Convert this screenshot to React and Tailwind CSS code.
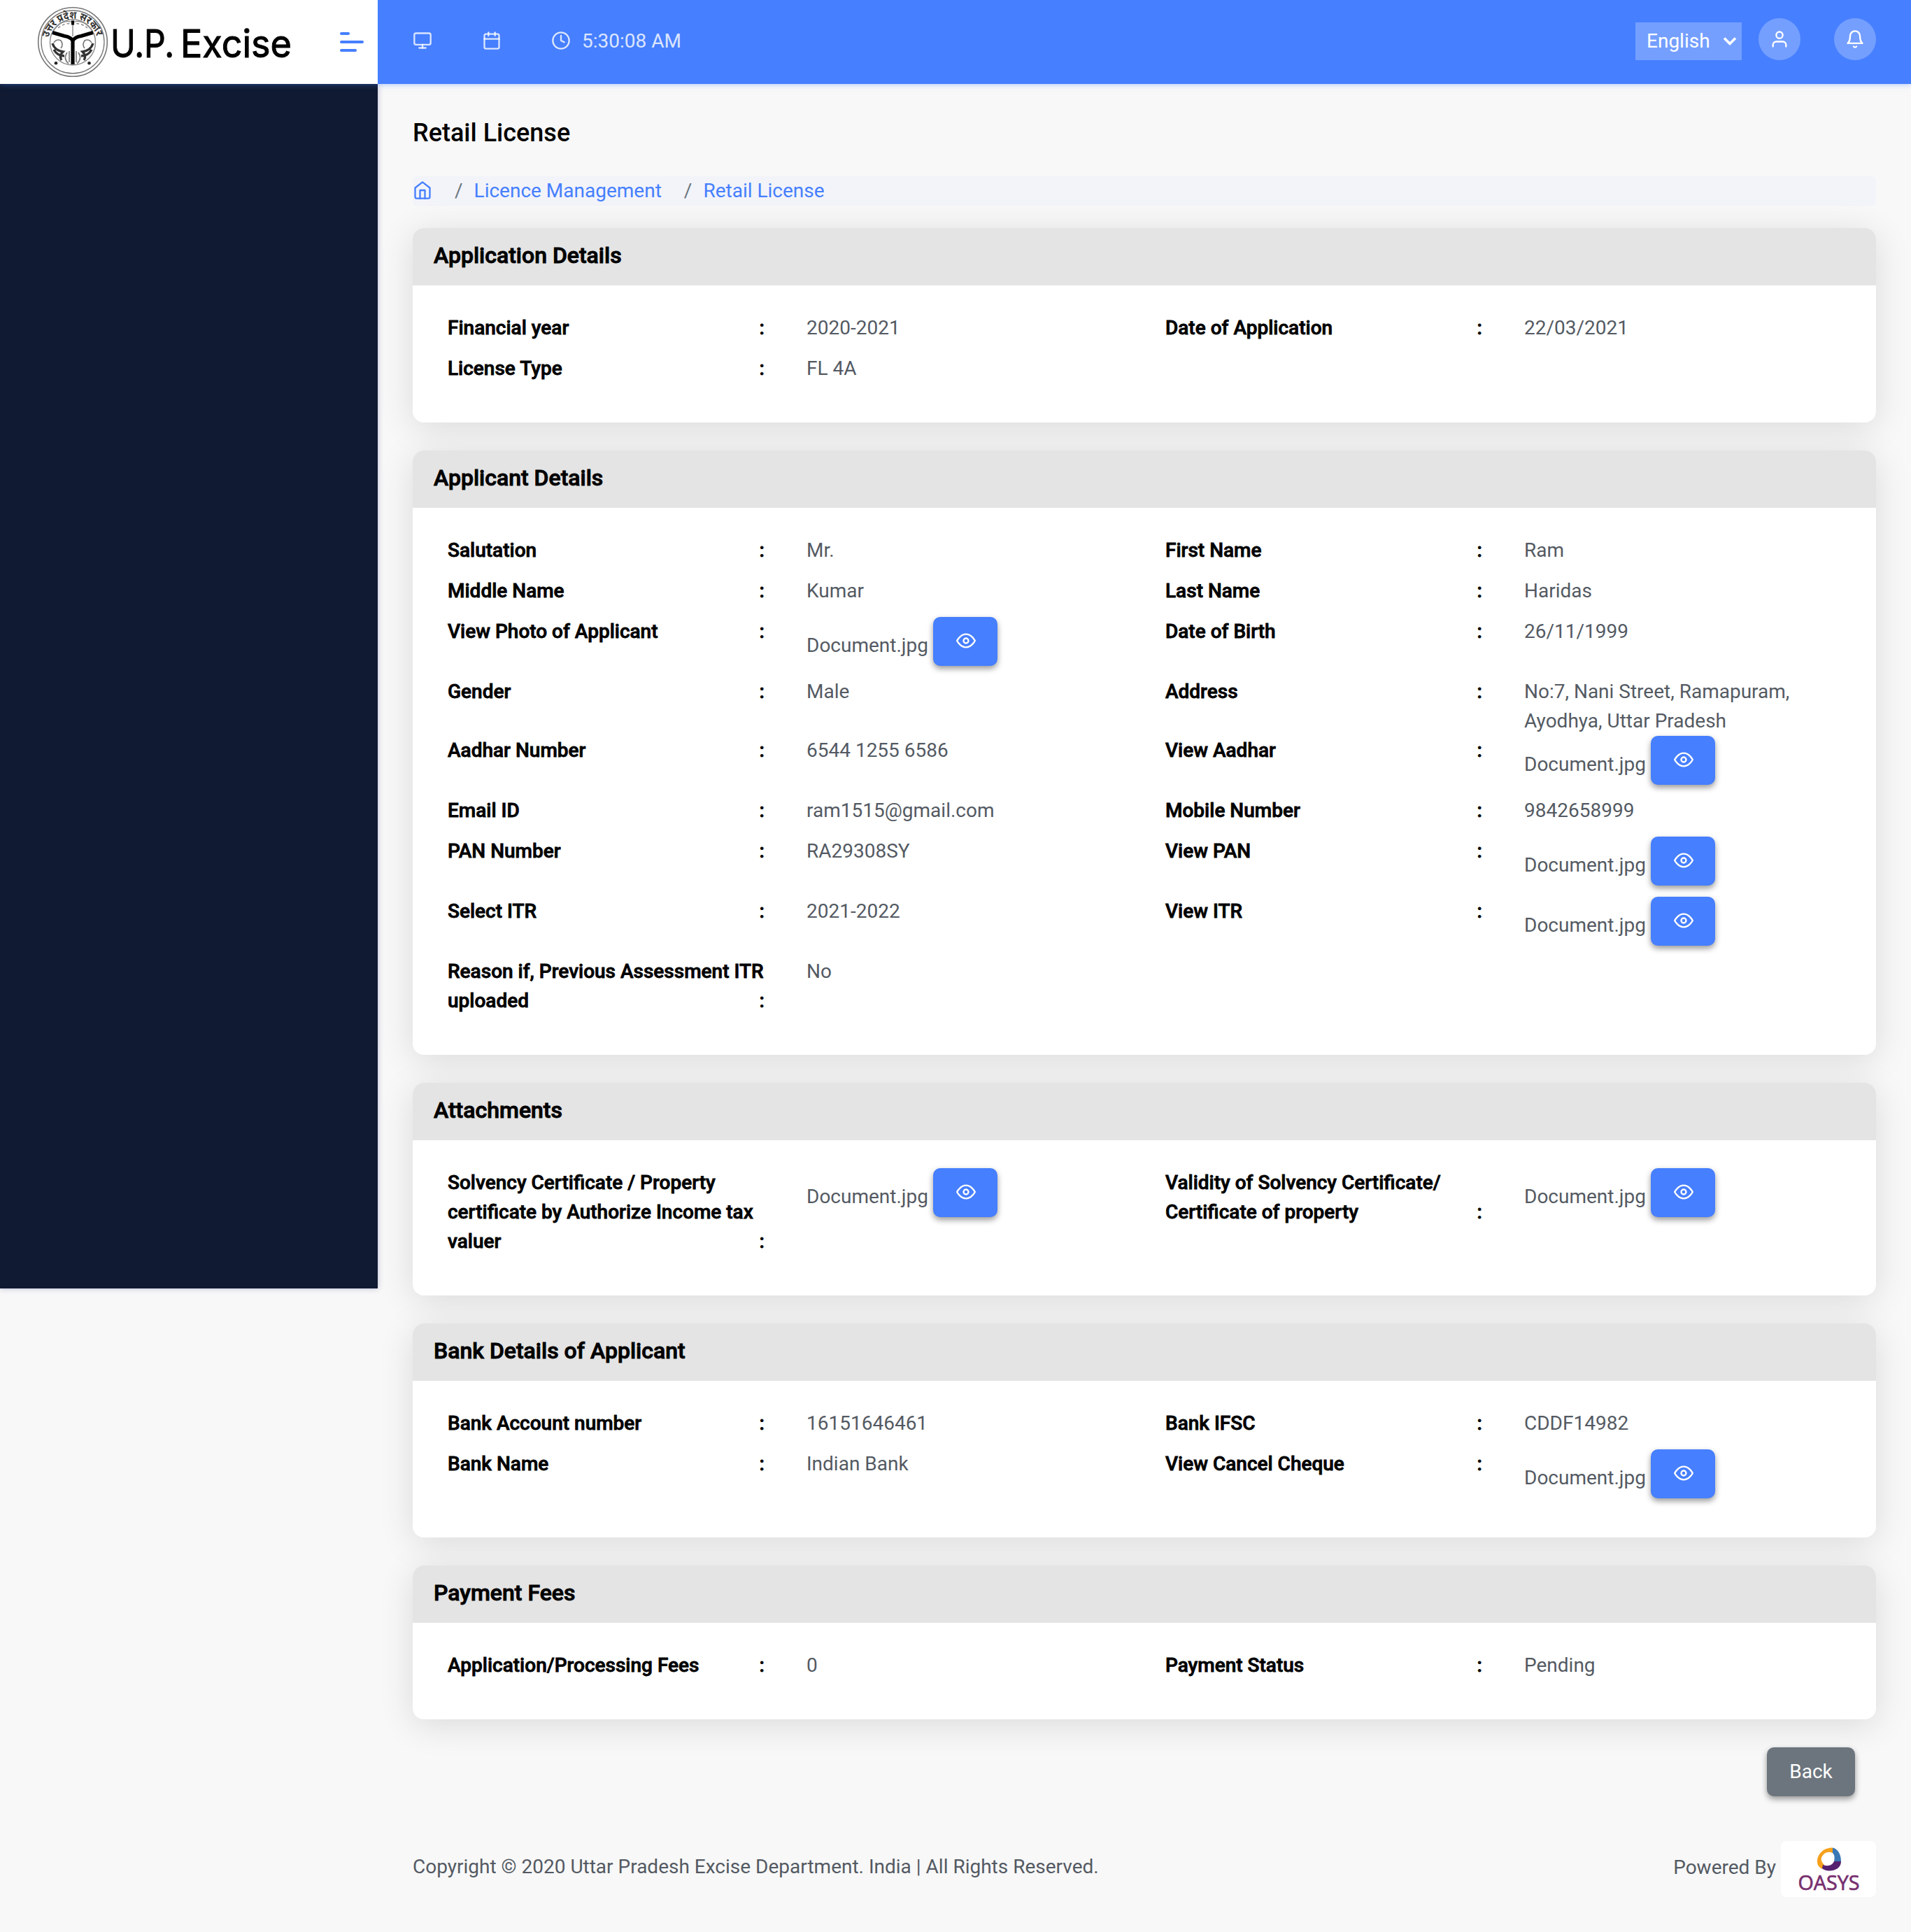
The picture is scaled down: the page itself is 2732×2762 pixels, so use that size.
import { FiMonitor, FiCalendar, FiClock, FiUser, FiBell, FiHome, FiEye } from "react-icons/fi";

const sections = [
  {
    title: "Application Details",
    rows: [
      [["Financial year"], "2020-2021", ["Date of Application"], "22/03/2021"],
      [["License Type"], "FL 4A"],
    ],
  },
  {
    title: "Applicant Details",
    rows: [
      [["Salutation"], "Mr.", ["First Name"], "Ram"],
      [["Middle Name"], "Kumar", ["Last Name"], "Haridas"],
      [["View Photo of Applicant"], { doc: "Document.jpg" }, ["Date of Birth"], "26/11/1999"],
      [["Gender"], "Male", ["Address"], "No:7, Nani Street, Ramapuram, Ayodhya, Uttar Pradesh"],
      [["Aadhar Number"], "6544 1255 6586", ["View Aadhar"], { doc: "Document.jpg" }],
      [["Email ID"], "ram1515@gmail.com", ["Mobile Number"], "9842658999"],
      [["PAN Number"], "RA29308SY", ["View PAN"], { doc: "Document.jpg" }],
      [["Select ITR"], "2021-2022", ["View ITR"], { doc: "Document.jpg" }],
      [["Reason if, Previous Assessment ITR", "uploaded"], "No"],
    ],
  },
  {
    title: "Attachments",
    rows: [
      [
        ["Solvency Certificate / Property", "certificate by Authorize Income tax", "valuer"],
        { doc: "Document.jpg" },
        ["Validity of Solvency Certificate/", "Certificate of property"],
        { doc: "Document.jpg" },
      ],
    ],
  },
  {
    title: "Bank Details of Applicant",
    rows: [
      [["Bank Account number"], "16151646461", ["Bank IFSC"], "CDDF14982"],
      [["Bank Name"], "Indian Bank", ["View Cancel Cheque"], { doc: "Document.jpg" }],
    ],
  },
  {
    title: "Payment Fees",
    rows: [[["Application/Processing Fees"], "0", ["Payment Status"], "Pending"]],
  },
];

function Label({ lines }) {
  return (
    <div className="mb-4 px-[30px] font-medium text-black [-webkit-text-stroke:0.8px_#000]">
      {lines.map((line, i) => (
        <div key={line} className="flex justify-between whitespace-nowrap">
          <span>{line}</span>
          {i === lines.length - 1 && <span>:</span>}
        </div>
      ))}
    </div>
  );
}

function Value({ value }) {
  if (value.doc) {
    return (
      <div className="mb-4 flex px-[30px]">
        <span className="pt-5">{value.doc}</span>
        <button className="ml-[7px] flex h-[70px] w-[92px] justify-center rounded-[10px] bg-[#467fff] pt-[19.5px] pl-px text-white shadow-[0_4px_8px_rgba(0,0,0,0.4)]">
          <FiEye className="size-[28px]" />
        </button>
      </div>
    );
  }
  return <div className="px-[30px]">{value}</div>;
}

function Card({ title, rows }) {
  return (
    <section className="mb-10 rounded-2xl bg-white shadow-[0_8px_50px_rgba(0,0,0,0.12)]">
      <h2 className="h-[82px] rounded-t-2xl bg-[#e4e4e4] pl-[30px] text-[32px] leading-[78px] font-medium text-black [-webkit-text-stroke:0.9px_#000]">{title}</h2>
      <div className="px-5 py-10">
        {rows.map((r) => (
          <div key={r[0][0]} className="grid grid-cols-4">
            <Label lines={r[0]} />
            <Value value={r[1]} />
            {r[2] && <Label lines={r[2]} />}
            {r[3] && <Value value={r[3]} />}
          </div>
        ))}
      </div>
    </section>
  );
}

function BrandLogo() {
  return (
    <svg className="ml-[50px] h-[120px] w-[380px]" viewBox="50 0 380 120">
      <defs>
        <path id="arc" d="M69.500 54 A35.500 35.500 0 0 1 138.500 54" />
      </defs>
      <g fill="none" stroke="#777">
        <circle cx="104" cy="60" r="49.300" strokeWidth="1.600" />
        <circle cx="104" cy="60" r="45" strokeWidth="1.300" />
      </g>
      <text fontFamily="Noto Sans, sans-serif" fontSize="15" fontWeight="700" fill="#333">
        <textPath href="#arc" textLength="92" lengthAdjust="spacingAndGlyphs">उत्तर प्रदेश सरकार</textPath>
      </text>
      <g fill="none" stroke="#888" strokeWidth="1.400">
        <circle cx="104" cy="60.500" r="32.500" />
        <path d="M75 46 Q88 26 104 32 Q120 26 133 46 M104 30 V52" />
        <path d="M83 40 Q94 31 104 35 Q114 31 125 40" strokeDasharray="4 3" />
      </g>
      <path d="M75 46.500 L92 51.500 Q101 53 104 58 Q107 53 116 51.500 L133 46.500" fill="none" stroke="#000" strokeWidth="5" />
      <path d="M104 55 V92" stroke="#000" strokeWidth="5.200" />
      <path d="M102 29.500h4v6h-4z" fill="#000" />
      <g fill="none" stroke="#333" strokeWidth="3.400">
        <path d="M75 62 Q78 72 90 74 Q84 80 88 86 M77 71 Q82 80 92 80 M133 62 Q130 72 118 74 Q124 80 120 86 M131 71 Q126 80 116 80" />
      </g>
      <g fill="none" stroke="#777" strokeWidth="1.600">
        <path d="M77 61q4 -6 10 -3q4 6 0 11 M131 61q-4 -6 -10 -3q-4 6 0 11 M96 75 Q90 84 98 91 M112 75 Q118 84 110 91 M99 73 V89 M109 73 V89" />
      </g>
      <circle cx="80" cy="90.300" r="2.300" fill="#222" />
      <circle cx="127.500" cy="90.300" r="2.300" fill="#222" />
      <g fontFamily="Inter, sans-serif" fontSize="55" fontWeight="400" stroke="#000" strokeWidth="1">
        <text x="158" y="81.500" textLength="91" lengthAdjust="spacingAndGlyphs">U.P.</text>
        <text x="258" y="81.500" textLength="159" lengthAdjust="spacingAndGlyphs">Excise</text>
      </g>
    </svg>
  );
}

function OasysLogo() {
  return (
    <svg className="ml-[7px] h-20 w-[136px] rounded-lg bg-white" viewBox="0 0 136 80">
      <path d="M74 9.500 C62 9 52 18 52 29 C52 34 54 37 59 40 L62 34 C57 29 56 24 61 19 C65 15 70 15 74 17 Z" fill="#f6a01c" />
      <path d="M74 9.500 C81 11 86 18 86 29 H76 C77 24 77 20 74 17 Z" fill="#3a78b5" />
      <path d="M86 29 C86 38 78 42.500 69 42.500 C65 42.500 61 41 59 39 L60 34 C68 37 74 34 76 29 Z" fill="#54206f" />
      <text x="24.500" y="69.500" textLength="88" lengthAdjust="spacingAndGlyphs" fontFamily="Open Sans, sans-serif" fontSize="30" fontWeight="400" fill="#77306f" stroke="#77306f" strokeWidth="0.700">
        OASYS
      </text>
    </svg>
  );
}

export default function App() {
  return (
    <div className="flex h-[2762px] w-[2732px] flex-col overflow-hidden bg-[#f8f8f8] font-[Roboto,sans-serif] text-[28px] leading-[42px] text-[#545a63]">
      <header className="relative z-10 flex h-[120px] shrink-0 shadow-[0_0_8px_rgba(70,127,255,0.5)]">
        <div className="flex w-[540px] items-center bg-white">
          <BrandLogo />
          <div className="ml-[56px] flex flex-col gap-2">
            <span className="h-1 w-[14px] rounded-full bg-[#467fff]" />
            <span className="h-1 w-[34px] rounded-full bg-[#467fff]" />
            <span className="h-1 w-6 rounded-full bg-[#467fff]" />
          </div>
        </div>
        <div className="flex flex-1 items-start bg-[#467fff] pr-[50px] pl-[50px] text-white">
          <div className="flex h-[116px] items-center text-white/80">
            <FiMonitor className="size-[28px]" />
            <FiCalendar className="ml-[71px] size-[28px]" />
            <FiClock className="ml-[71px] size-[28px]" />
            <span className="ml-4 pt-px">5:30:08 AM</span>
          </div>
          <div className="mt-8 ml-auto flex h-[54px] w-[152px] items-center bg-white/25 pl-4">
            <span>English</span>
            <svg className="ml-[18px] h-[14px] w-5" viewBox="0 0 20 14">
              <path d="M2 2.500 L10 10.500 L18 2.500" fill="none" stroke="#fff" strokeWidth="3.600" />
            </svg>
          </div>
          <div className="mt-[26px] ml-6 flex size-[60px] items-center justify-center rounded-full bg-white/25">
            <FiUser className="size-[28px]" />
          </div>
          <div className="mt-[26px] ml-12 flex size-[60px] items-center justify-center rounded-full bg-white/25">
            <FiBell className="size-[28px]" />
          </div>
        </div>
      </header>
      <div className="flex flex-1">
        <aside className="relative h-[1722px] w-[540px] shrink-0 bg-[#101a32] shadow-[0_0_8px_rgba(40,40,140,0.3)]" />
        <main className="flex-1 px-[50px]">
          <h1 className="mt-[48px] text-[36px] leading-[44px] font-medium text-black">Retail License</h1>
          <nav className="mt-10 mb-8 flex h-[42px] items-center rounded-md bg-[#f2f4fa] text-[#467fff]">
            <FiHome className="mb-0.5 size-[28px]" />
            <span className="ml-[32px] text-[#6c757d]">/</span>
            <span className="ml-[16px]">Licence Management</span>
            <span className="ml-[32px] text-[#6c757d]">/</span>
            <span className="ml-[16px]">Retail License</span>
          </nav>
          {sections.map((s) => (
            <Card key={s.title} {...s} />
          ))}
          <div className="flex justify-end pr-[30px]">
            <button className="h-[70px] w-[126px] rounded-[10px] bg-[#6c757d] pb-px text-white shadow-[0_4px_8px_rgba(0,0,0,0.4)]">Back</button>
          </div>
          <footer className="mt-16 flex h-20 items-center justify-between">
            <span className="pb-1.5">Copyright © 2020 Uttar Pradesh Excise Department. India | All Rights Reserved.</span>
            <div className="flex items-center">
              <span className="pb-1">Powered By</span>
              <OasysLogo />
            </div>
          </footer>
        </main>
      </div>
    </div>
  );
}
